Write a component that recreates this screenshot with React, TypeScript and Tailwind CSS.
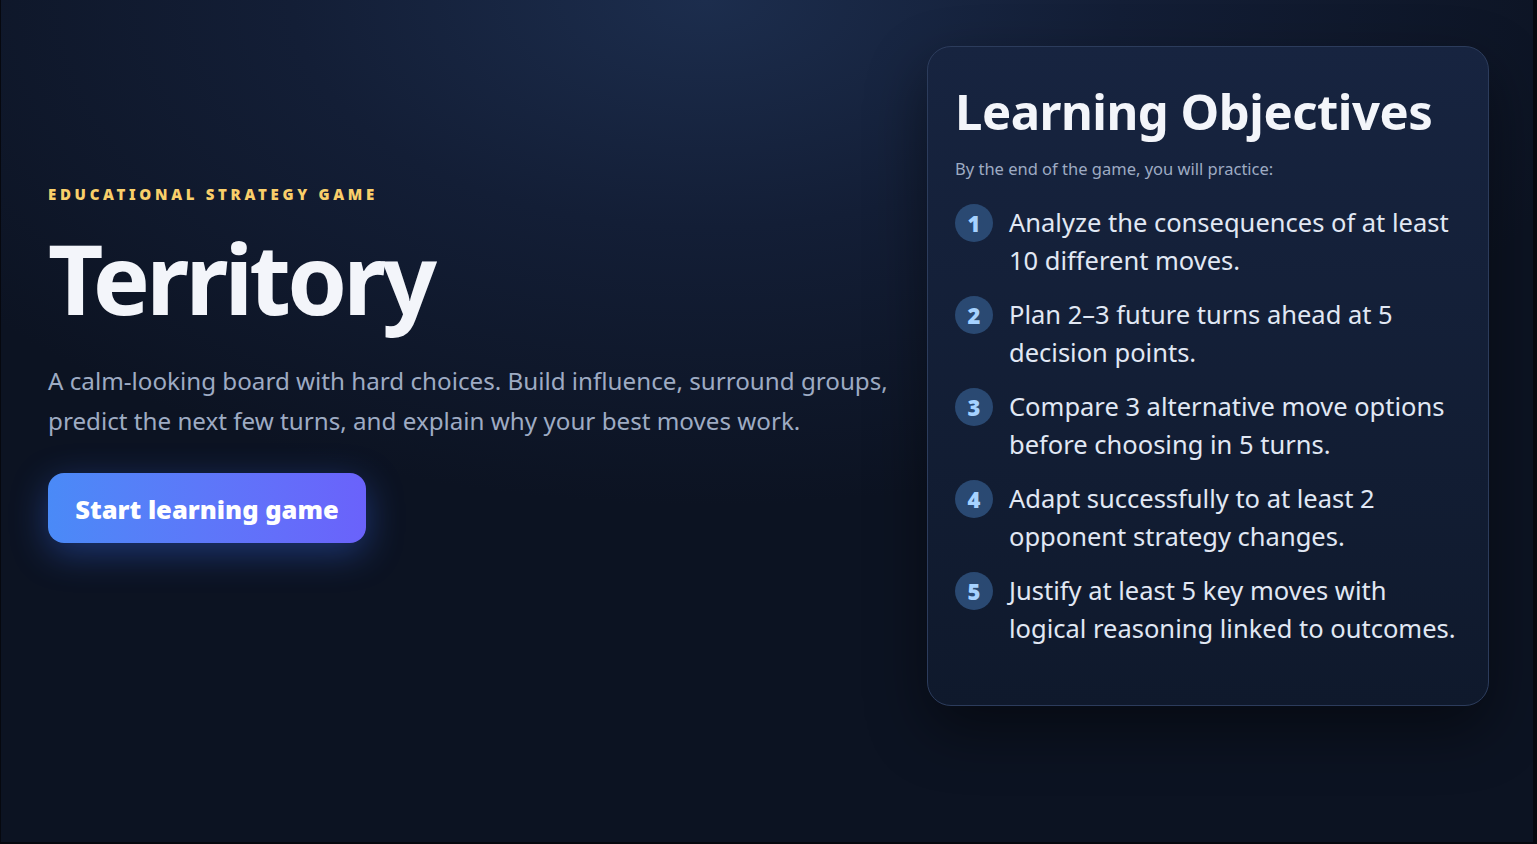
// Landing hero for the Territory learning game: pitch on the left,
// learning objectives card on the right.

const OBJECTIVES = [
  "Analyze the consequences of at least 10 different moves.",
  "Plan 2–3 future turns ahead at 5 decision points.",
  "Compare 3 alternative move options before choosing in 5 turns.",
  "Adapt successfully to at least 2 opponent strategy changes.",
  "Justify at least 5 key moves with logical reasoning linked to outcomes.",
]

export default function App() {
  return (
    <div className="h-[844px] w-full overflow-hidden border-b-2 border-l border-r-4 border-[#06080f] bg-[radial-gradient(ellipse_60%_60%_at_46%_0%,#1c2d4d_0%,#131e36_45%,#0c1322_100%)] font-['Noto_Sans',sans-serif]">
      <div className="grid grid-cols-[860px_562px] items-start gap-[19px] pl-[47px] pt-[46px]">
        <section className="mt-[137px] flex flex-col items-start">
          <p className="text-[15px] font-black uppercase tracking-[0.245em] text-[#f9cf6a]">
            Educational strategy game
          </p>
          <h1 className="mt-[19px] text-[96px] font-bold leading-[1.1] tracking-[-0.04em] text-[#f3f5fa]">
            Territory
          </h1>
          <p className="mt-[31px] text-[24.2px] leading-[40px] text-[#9eabc3]">
            A calm-looking board with hard choices. Build influence, surround groups, predict the next few turns, and
            explain why your best moves work.
          </p>
          <button className="mt-[32px] h-[70px] w-[318px] rounded-2xl bg-gradient-to-r from-[#4a8af7] to-[#6a62fb] pt-[3px] text-[25.5px] font-black text-white shadow-[0_10px_36px_rgba(59,110,246,0.38)]">
            Start learning game
          </button>
        </section>

        <aside className="rounded-3xl border border-[#2c3c5c] bg-gradient-to-b from-[#172440] to-[#0f192c] px-[27px] pb-[58px] pt-[36px] shadow-[0_24px_60px_rgba(0,0,0,0.45)]">
          <h2 className="text-[49px] font-bold leading-[1.15] tracking-[-0.01em] text-[#f3f5fa]">Learning Objectives</h2>
          <p className="mt-[18px] text-[16.5px] text-[#9eabc3]">By the end of the game, you will practice:</p>
          <ol className="mt-[21px] flex flex-col gap-[16px]">
            {OBJECTIVES.map((text, i) => (
              <li key={i} className="flex items-start gap-[16px]">
                <span className="mt-[1px] flex h-[38px] w-[38px] shrink-0 items-center justify-center rounded-full bg-[#2a4972] text-[22px] font-black text-[#a6d2ff]">
                  {i + 1}
                </span>
                <span className="text-[25.5px] leading-[38px] text-[#e1e8f4]">{text}</span>
              </li>
            ))}
          </ol>
        </aside>
      </div>
    </div>
  )
}
